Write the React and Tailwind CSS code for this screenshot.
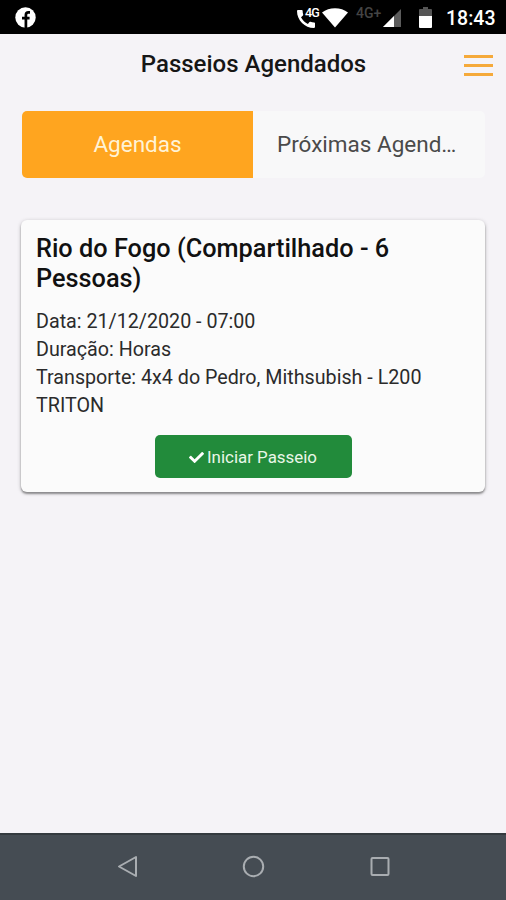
import { useState } from 'react';
import { FaCheck } from 'react-icons/fa';
import { MdCall } from 'react-icons/md';

const TABS = ['Agendas', 'Próximas Agendas'];

const TOURS = [
  {
    id: 1,
    title: 'Rio do Fogo (Compartilhado - 6 Pessoas)',
    date: '21/12/2020 - 07:00',
    duration: 'Horas',
    transport: '4x4 do Pedro, Mithsubish - L200 TRITON',
  },
];

function StatusBar() {
  return (
    <div className="flex h-[34px] shrink-0 items-center bg-black pl-[15px] pr-[11px] text-white">
      <svg width="21" height="21" viewBox="0 0 21 21">
        <circle cx="10.5" cy="10.5" r="10.2" fill="#fff" />
        <path d="M10.9 21V8Q10.9 5.3 13.4 5.3H15M7 11.2H14.6" fill="none" stroke="#000" strokeWidth="2.7" />
      </svg>
      <div className="ml-auto flex h-full items-start">
        {/* Call over 4G */}
        <div className="relative mt-[9px] h-5 w-[25px]">
          <MdCall size={24} className="absolute -left-[3px] -top-[2px]" />
          <span className="absolute left-[7px] -top-[2px] bg-black pl-px text-[12.5px] font-medium leading-[12px] tracking-[-0.8px]">4G</span>
        </div>
        <svg width="26" height="20" viewBox="0 0 26 20" className="mt-[8px]" fill="currentColor">
          <path d="M0 4.5C7 -1.2 19 -1.2 26 4.5L13 19.5Z" />
        </svg>
        <span className="ml-[8px] mt-[6px] w-[27px] text-[14px] font-medium leading-[15px] text-[#444]">4G+</span>
        <svg width="18" height="18" viewBox="0 0 18 18" className="mt-[9px]">
          <path d="M18 0V18H0Z" fill="#5c5c5c" />
          <path d="M11 7V18H0Z" fill="#fff" />
        </svg>
        <svg width="13" height="21" viewBox="0 0 13 21" className="ml-[18px] mt-[7px]">
          <path d="M4 0H9V2H12Q13 2 13 3V9H0V3Q0 2 1 2H4Z" fill="#555" />
          <path d="M0 9H13V20Q13 21 12 21H1Q0 21 0 20Z" fill="#fff" />
        </svg>
        <span className="ml-[14px] mt-[7px] w-[49px] whitespace-nowrap text-[19.5px] font-medium leading-6">18:43</span>
      </div>
    </div>
  );
}

function Header() {
  return (
    <header className="grid h-[61px] shrink-0 grid-cols-[60px_1fr_60px] items-center pr-[13px]">
      <span />
      <h1 className="whitespace-nowrap pb-px pl-[14px] text-center text-[24px] font-medium text-[#161616]">Passeios Agendados</h1>
      <button aria-label="Menu" className="flex flex-col gap-[6px] justify-self-end pt-[2px]">
        <span className="h-[3px] w-[29px] bg-[#f5a93a]" />
        <span className="h-[3px] w-[29px] bg-[#f5a93a]" />
        <span className="h-[3px] w-[29px] bg-[#f5a93a]" />
      </button>
    </header>
  );
}

function TourCard({ tour }) {
  return (
    <article className="flex h-[272px] flex-col rounded-[6px] bg-[#fbfbfb] pl-[15px] pr-[15px] pt-[14px] shadow-[0_2px_2px_rgba(0,0,0,0.34),0_1px_4px_rgba(0,0,0,0.22)]">
      <h2 className="text-[25.3px] font-medium leading-[30px] text-[#111]">{tour.title}</h2>
      <div className="mt-[14px] text-[19.7px] leading-[28px] text-[#2b2b2b]">
        <p>{`Data: ${tour.date}`}</p>
        <p>{`Duração: ${tour.duration}`}</p>
        <p>{`Transporte: ${tour.transport}`}</p>
      </div>
      <button className="mt-[15px] flex h-[43px] w-[197px] items-center justify-center gap-[3px] self-center rounded-[5px] bg-[#228b3b] pt-[2px] text-[16.9px] text-[#e9f7e8]">
        <FaCheck size={15} className="text-white" />
        Iniciar Passeio
      </button>
    </article>
  );
}

function NavBar() {
  return (
    <nav className="flex h-[67px] shrink-0 items-center justify-center border-t-2 border-[#343a3f] bg-[#454c53] pb-px text-[#a9adb1]">
      <svg width="126" height="24" viewBox="0 0 126 24" fill="none" stroke="currentColor" strokeWidth="2">
        <path d="M72 2V21L55 11.5Z" strokeLinejoin="round" />
      </svg>
      <svg width="126" height="24" viewBox="0 0 126 24" fill="none" stroke="currentColor" strokeWidth="2">
        <circle cx="63.5" cy="11.5" r="9.7" />
      </svg>
      <svg width="126" height="24" viewBox="0 0 126 24" fill="none" stroke="currentColor" strokeWidth="2">
        <rect x="55.5" y="3" width="17" height="17" rx="1" />
      </svg>
    </nav>
  );
}

export default function App() {
  const [active, setActive] = useState(0);

  return (
    <div className="flex h-[900px] w-[506px] flex-col overflow-hidden bg-[#f5f3f7] font-['Roboto',sans-serif]">
      <StatusBar />
      <Header />
      <main className="flex-1 px-[21px] pt-[16px]">
        <div className="flex h-[67px] pl-px">
          {TABS.map((tab, i) => (
            <button
              key={tab}
              onClick={() => setActive(i)}
              className={`truncate px-[24px] text-[22.5px] ${
                active === i ? 'w-[231px] rounded-l-[5px] bg-[#ffa51f] text-[#fff3d6]' : 'w-[232px] rounded-r-[5px] bg-[#f8f8f9] text-[#4a4a4a]'
              }`}
            >
              {tab}
            </button>
          ))}
        </div>
        <div className="mt-[42px]">
          {TOURS.map(tour => <TourCard key={tour.id} tour={tour} />)}
        </div>
      </main>
      <NavBar />
    </div>
  );
}
